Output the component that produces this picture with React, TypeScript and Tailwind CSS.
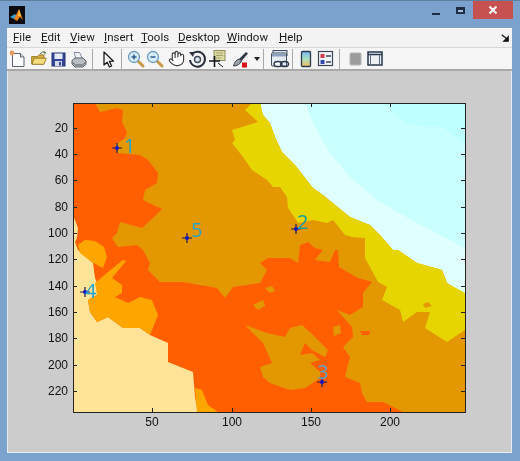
import { Hand } from 'lucide-react';

const menuItems = [
  { key: 'F', rest: 'ile', width: 'w-[28px]' },
  { key: 'E', rest: 'dit', width: 'w-[29px]' },
  { key: 'V', rest: 'iew', width: 'w-[34px]' },
  { key: 'I', rest: 'nsert', width: 'w-[37px]' },
  { key: 'T', rest: 'ools', width: 'w-[37px]' },
  { key: 'D', rest: 'esktop', width: 'w-[49px]' },
  { key: 'W', rest: 'indow', width: 'w-[52px]' },
  { key: 'H', rest: 'elp', width: 'w-[30px]' },
];

const xTicks = [
  { x: 152, label: '50' },
  { x: 232, label: '100' },
  { x: 311, label: '150' },
  { x: 390, label: '200' },
];

const yTicks = [
  { y: 128, label: '20' },
  { y: 154, label: '40' },
  { y: 180, label: '60' },
  { y: 207, label: '80' },
  { y: 233, label: '100' },
  { y: 259, label: '120' },
  { y: 286, label: '140' },
  { y: 312, label: '160' },
  { y: 338, label: '180' },
  { y: 365, label: '200' },
  { y: 391, label: '220' },
];

const markers = [
  { x: 117, y: 148 },
  { x: 296, y: 229 },
  { x: 322, y: 382 },
  { x: 85, y: 292 },
  { x: 187, y: 238 },
];

// map regions, in page pixels
const regions = {
  band: '260,103 465,103 465,293 463,293 447,283 442,270 417,263 398,250 393,250 380,235 370,225 350,217 323,195 313,188 295,165 282,152 275,137 270,123 263,115',
  sky: '305,103 465,103 465,248 417,223 380,202 350,177 330,153 313,123',
  skyDeep: '385,103 465,103 465,145 443,127 410,125 390,110',
  yellow: '252,103 260,103 263,115 270,123 275,137 282,152 295,165 313,188 323,195 350,217 370,225 380,235 393,250 398,250 417,263 442,270 447,283 465,293 465,330 447,342 425,328 430,312 417,312 403,322 400,310 382,300 387,287 378,282 365,258 365,238 352,237 345,235 333,220 327,223 313,220 298,223 295,218 288,208 287,197 280,187 273,187 267,180 252,170 243,157 232,143 235,140 232,130 258,122 245,110',
  red: '73,103 95,103 100,112 117,108 123,110 122,122 127,132 125,138 115,145 117,153 140,155 148,160 158,173 157,183 145,190 143,200 162,209 153,218 142,228 120,222 117,233 112,238 118,247 137,245 143,250 150,263 148,270 160,282 183,282 217,288 225,298 233,287 260,283 267,270 260,263 268,258 290,258 298,263 300,245 308,242 315,248 323,250 315,260 330,262 335,250 338,250 339,267 358,278 372,282 363,293 363,307 350,315 337,310 344,318 352,327 353,337 343,347 350,357 345,377 360,383 362,393 367,402 383,402 403,412 73,412',
  island: '245,325 267,333 285,337 290,328 302,325 313,335 328,350 325,357 312,350 305,343 300,355 312,353 320,360 310,363 320,372 320,378 305,388 290,390 270,383 263,377 260,367 272,363 263,343',
  cream: '73,215 78,228 77,238 75,242 78,250 93,263 95,278 97,283 97,295 88,300 90,312 97,322 108,317 123,328 140,328 150,335 168,343 168,362 193,372 195,397 198,412 73,412',
  blob: '78,245 85,240 95,241 104,247 107,257 103,268 93,263 80,253',
  orange: '95,283 108,272 123,260 126,261 112,278 122,285 122,293 115,297 128,303 140,297 152,300 158,315 150,335 140,328 123,328 108,317 97,322 90,312 88,300 97,295',
  sliver: '195,388 202,390 208,405 218,412 197,412',
};

function MatlabLogo() {
  return (
    <svg width="16" height="18" viewBox="0 0 16 18">
      <rect width="16" height="18" fill="#0c0c10" />
      <path d="M1 11 L6 8 L8 10 L5 13 Z" fill="#3f9fd0" />
      <path d="M5 13 L10 3 L14 14 L11 11 L8 15 Z" fill="#e8801c" />
      <path d="M10 3 L12 10 L9 10 Z" fill="#f4c040" />
    </svg>
  );
}

function NewIcon() {
  return (
    <svg width="20" height="20" viewBox="0 0 20 20">
      <path d="M4.5 4.5 H12.5 L16 8 V17.5 H4.5 Z" fill="#fbfcfe" stroke="#5b6472" />
      <path d="M12.5 4.5 V8 H16" fill="#dfe4ea" stroke="#5b6472" />
      <circle cx="4" cy="4" r="2.4" fill="#ee9a5a" />
    </svg>
  );
}

function OpenIcon() {
  return (
    <svg width="18" height="18" viewBox="0 0 22 22">
      <path d="M2 8 H9 L11 6 H17 V17 H2 Z" fill="#d8b13c" stroke="#8a6d20" />
      <path d="M2.5 17.5 L5 10 H20 L17 17.5 Z" fill="#f4dc7c" stroke="#8a6d20" />
      <path d="M12 5 Q15 1 19 3 M19 3 L16.5 2 M19 3 L18 5.5" fill="none" stroke="#5f6d3a" strokeWidth="1.2" />
    </svg>
  );
}

function SaveIcon() {
  return (
    <svg width="20" height="20" viewBox="0 0 20 20">
      <rect x="3" y="4" width="13" height="13" fill="#33479a" stroke="#26336f" />
      <rect x="5.5" y="4.5" width="8" height="5.5" fill="#e6ecf6" />
      <rect x="6" y="12" width="7" height="5" fill="#d6dae4" />
      <rect x="10" y="13" width="2" height="3.5" fill="#33479a" />
    </svg>
  );
}

function PrintIcon() {
  return (
    <svg width="20" height="20" viewBox="0 0 20 20">
      <path d="M5 3.5 H10.5 L13.5 9.5 H7 Z" fill="#eef2f8" stroke="#7f8fa6" />
      <path d="M3 11.5 L6 9 H14 L17 12 V15.5 L13.5 18 H6 L3 15 Z" fill="#b9bdc4" stroke="#5c6068" />
      <path d="M3.5 13.5 L6.5 16 H13.5 L16.5 13.5" fill="none" stroke="#55585e" />
    </svg>
  );
}

function ArrowIcon() {
  return (
    <svg width="16" height="20" viewBox="0 0 16 20">
      <path d="M4 3 V16 L7.2 13.2 L9.4 18 L11.6 17 L9.4 12.4 L13.5 12.2 Z" fill="#ffffff" stroke="#1c1c1c" strokeWidth="1.3" strokeLinejoin="round" />
    </svg>
  );
}

function ZoomIcon({ plus }: { plus: boolean }) {
  return (
    <svg width="20" height="20" viewBox="0 0 20 20">
      <path d="M11.5 11.5 L17 17" stroke="#c49a45" strokeWidth="3" strokeLinecap="round" />
      <circle cx="8" cy="8" r="5.5" fill="#d8ebf9" stroke="#6b9bc2" strokeWidth="1.3" />
      <path d={plus ? 'M5.5 8 H10.5 M8 5.5 V10.5' : 'M5.5 8 H10.5'} stroke="#2d5c92" strokeWidth="1.5" />
    </svg>
  );
}

function RotateIcon() {
  return (
    <svg width="20" height="20" viewBox="0 0 20 20">
      <path d="M5 5 A7.5 7.5 0 1 1 3 11" fill="none" stroke="#27303c" strokeWidth="2" />
      <path d="M2 3 L7.5 3 L6 8 Z" fill="#27303c" />
      <circle cx="10.5" cy="10.5" r="3" fill="#dfe5ee" stroke="#3e4a5a" strokeWidth="1.4" />
    </svg>
  );
}

function DataCursorIcon() {
  return (
    <svg width="20" height="20" viewBox="0 0 20 20">
      <rect x="6" y="1.5" width="11" height="10" fill="#dcd9a0" stroke="#8f8c60" />
      <path d="M8 4 H15 M8 6.5 H15 M8 9 H13" stroke="#a3a070" />
      <path d="M1 12 H12 M6.5 7 V18" stroke="#14181f" strokeWidth="1.6" />
      <path d="M10 14 L15 18" stroke="#14181f" />
    </svg>
  );
}

function BrushIcon() {
  return (
    <svg width="20" height="20" viewBox="0 0 20 20">
      <path d="M9 10 L16 3 L18 4.5 L11.5 12 Z" fill="#2f3845" />
      <path d="M11.5 12 L9 10 Q5 11 3.5 17 Q9 17 11.5 12 Z" fill="#9aa0a8" stroke="#3c424c" />
      <rect x="12" y="13.5" width="5" height="5" fill="#d8121c" />
    </svg>
  );
}

function LinkIcon() {
  return (
    <svg width="22" height="22" viewBox="0 0 22 22">
      <rect x="4" y="2.5" width="14" height="5" fill="#dbe4ee" stroke="#414f63" />
      <rect x="2.5" y="5" width="15" height="13" rx="1" fill="#e8eef5" stroke="#414f63" />
      <rect x="3" y="6" width="14" height="2.5" fill="#8aa2bd" />
      <ellipse cx="9" cy="16" rx="4" ry="2.6" fill="#ffffff" stroke="#2c3c52" strokeWidth="1.5" />
      <ellipse cx="15.5" cy="16" rx="4" ry="2.6" fill="none" stroke="#2c3c52" strokeWidth="1.5" />
    </svg>
  );
}

function ColorbarIcon() {
  return (
    <svg width="20" height="20" viewBox="0 0 20 20">
      <defs>
        <linearGradient id="bar" x1="0" y1="0" x2="0" y2="1">
          <stop offset="0" stopColor="#7cb8f0" />
          <stop offset="0.5" stopColor="#a8e0c0" />
          <stop offset="1" stopColor="#f6c060" />
        </linearGradient>
      </defs>
      <rect x="5.5" y="2.5" width="9" height="15" rx="1" fill="url(#bar)" stroke="#2b3950" strokeWidth="1.3" />
    </svg>
  );
}

function LegendIcon() {
  return (
    <svg width="20" height="20" viewBox="0 0 20 20">
      <rect x="2.5" y="2.5" width="14" height="14" fill="#f4f5f8" stroke="#3b4658" strokeWidth="1.2" />
      <rect x="4.5" y="5" width="4" height="4" fill="#d33a4c" />
      <rect x="4.5" y="11" width="4" height="4" fill="#3248b0" />
      <path d="M10 7 H15 M10 13 H15" stroke="#3b4658" strokeWidth="1.6" />
    </svg>
  );
}

function PlotToolsIcon() {
  return (
    <svg width="20" height="20" viewBox="0 0 20 20">
      <rect x="4" y="4" width="11" height="12" rx="1" fill="#9c9c9c" stroke="#b4b4b4" />
    </svg>
  );
}

function DockIcon() {
  return (
    <svg width="20" height="20" viewBox="0 0 20 20">
      <rect x="3" y="3" width="14" height="13" fill="#eef0f2" stroke="#27364e" strokeWidth="1.5" />
      <path d="M3 5.5 H17" stroke="#27364e" strokeWidth="1.5" />
      <path d="M5.5 5.5 V16 M14.5 5.5 V16" stroke="#5a6a82" />
    </svg>
  );
}

function Separator({ className }: { className: string }) {
  return <div className={`w-px h-[20px] bg-[#a8a8a8] ${className}`} />;
}

function Plot() {
  return (
    <svg className="block font-['Liberation_Sans']" width="503" height="381" viewBox="8 71 503 381">
      <rect x="73" y="103" width="392" height="309" fill="#e39700" />
      <polygon points={regions.band} fill="#e0ffff" />
      <polygon points={regions.sky} fill="#c9ffff" />
      <polygon points={regions.skyDeep} fill="#bdffff" />
      <polygon points={regions.yellow} fill="#e6d500" />
      <polygon points={regions.red} fill="#ff5f00" />
      <polygon points={regions.island} fill="#e39700" />
      <polygon points="265,288 272,286 275,291 270,293" fill="#e39700" />
      <polygon points="253,305 263,300 265,306 258,310" fill="#e39700" />
      <polygon points="333,327 340,325 341,333 334,336" fill="#e39700" />
      <polygon points="360,331 370,331 369,335 362,335" fill="#ff5f00" />
      <polygon points="423,304 428,302 432,306 425,308" fill="#e39700" />
      <polygon points={regions.cream} fill="#fee398" />
      <polygon points={regions.blob} fill="#ffa500" />
      <polygon points={regions.orange} fill="#ffa500" />
      <polygon points={regions.sliver} fill="#ffa500" />
      <rect x="73.5" y="103.5" width="392" height="309" fill="none" stroke="#26221e" />
      {xTicks.map((t) => (
        <g key={t.label}>
          <path d={`M${t.x + 0.5} 103 V107 M${t.x + 0.5} 412 V408`} stroke="#26221e" />
          <text x={t.x} y={426} textAnchor="middle" className="text-[12px] fill-[#111111]">
            {t.label}
          </text>
        </g>
      ))}
      {yTicks.map((t) => (
        <g key={t.label}>
          <path d={`M73 ${t.y + 0.5} H77 M465 ${t.y + 0.5} H461`} stroke="#26221e" />
          <text x={68} y={t.y + 4} textAnchor="end" className="text-[12px] fill-[#111111]">
            {t.label}
          </text>
        </g>
      ))}
      {markers.map((m) => (
        <g key={m.x}>
          <path d={`M${m.x - 5} ${m.y} H${m.x + 5} M${m.x} ${m.y - 5} V${m.y + 5}`} stroke="#1c1c50" strokeWidth="1.2" />
          <circle cx={m.x} cy={m.y} r="2" fill="#1414c8" />
        </g>
      ))}
      <g className="font-['Open_Sans'] text-[20px]">
        <text x="124" y="153" className="fill-[#1ea5c9]">1</text>
        <text x="297" y="229" className="fill-[#1d9c9e]">2</text>
        <text x="317" y="379" className="fill-[#5fa2c9]">3</text>
        <text x="85" y="298" className="fill-[#1ea0d0]">4</text>
        <text x="191" y="237" className="fill-[#2aa4c8]">5</text>
      </g>
    </svg>
  );
}

export default function App() {
  return (
    <div className="w-[520px] h-[461px] bg-[#7ba1cd] flex flex-col overflow-hidden border-t border-[#5f7f9f] blur-[0.35px]">
      {/* title bar */}
      <div className="h-[27px] flex items-start shrink-0 pl-[9px]">
        <div className="mt-[5px]">
          <MatlabLogo />
        </div>
        <div className="ml-auto mr-[7px] flex items-start">
          <div className="w-[8px] h-[2px] bg-[#1f2d42] mt-[12px] mr-[16px]" />
          <div className="w-[5px] h-[2px] border-2 border-t-[3px] border-[#1f2d42] bg-[#a9c1de] mt-[6px] mr-[8px] box-content" />
          <div className="w-[40px] h-[18px] bg-[#c75050] flex items-center justify-center">
            <svg width="10" height="10" viewBox="0 0 10 10">
              <path d="M1.5 1.5 L8.5 8.5 M8.5 1.5 L1.5 8.5" stroke="#ffffff" strokeWidth="2" />
            </svg>
          </div>
        </div>
      </div>

      <div className="ml-[7px] mr-[8px] flex flex-col">
        {/* menu bar */}
        <div className="h-[19px] bg-[#f3f3f3] border-t border-[#ffffff] flex items-center pl-[6px] font-['Roboto'] text-[11.5px] text-[#1a1a1a] shrink-0">
          {menuItems.map((item) => (
            <span key={item.key} className={`${item.width} leading-none`}>
              <span className="underline">{item.key}</span>
              {item.rest}
            </span>
          ))}
          <svg className="ml-auto mr-[3px]" width="8" height="8" viewBox="0 0 10 10">
            <path d="M1 1 L6 5 M9 9 V3.5 L3.5 9 Z" stroke="#111111" strokeWidth="1.5" fill="#111111" />
          </svg>
        </div>

        {/* toolbar */}
        <div className="h-[24px] bg-[#f5f5f5] border-t border-[#d8d8d8] border-b-2 border-b-[#a9a9a9] flex items-center shrink-0">
          <div className="ml-[1px]"><NewIcon /></div>
          <div className="ml-[2px]"><OpenIcon /></div>
          <div className="ml-[1px]"><SaveIcon /></div>
          <div><PrintIcon /></div>
          <Separator className="ml-[3px]" />
          <div className="ml-[7px]"><ArrowIcon /></div>
          <Separator className="ml-[5px]" />
          <div className="ml-[4px]"><ZoomIcon plus /></div>
          <div className="-ml-[1px]"><ZoomIcon plus={false} /></div>
          <Hand className="ml-[3px] text-[#3c3c3c] fill-white" size={17} strokeWidth={1.6} />
          <div className="ml-[2px]"><RotateIcon /></div>
          <div className="ml-[1px]"><DataCursorIcon /></div>
          <div className="ml-[2px]"><BrushIcon /></div>
          <svg className="ml-[4px]" width="6" height="4" viewBox="0 0 6 4">
            <path d="M0 0 H6 L3 4 Z" fill="#222222" />
          </svg>
          <Separator className="ml-[3px]" />
          <div className="ml-[5px]"><LinkIcon /></div>
          <Separator className="ml-[1px]" />
          <div className="ml-[3px]"><ColorbarIcon /></div>
          <div><LegendIcon /></div>
          <Separator className="ml-[3px]" />
          <div className="ml-[6px]"><PlotToolsIcon /></div>
          <div className="-ml-[1px]"><DockIcon /></div>
        </div>

        {/* figure area */}
        <div className="bg-[#cccccc] border-x border-b border-[#e4ecf5]">
          <Plot />
        </div>
      </div>
    </div>
  );
}
